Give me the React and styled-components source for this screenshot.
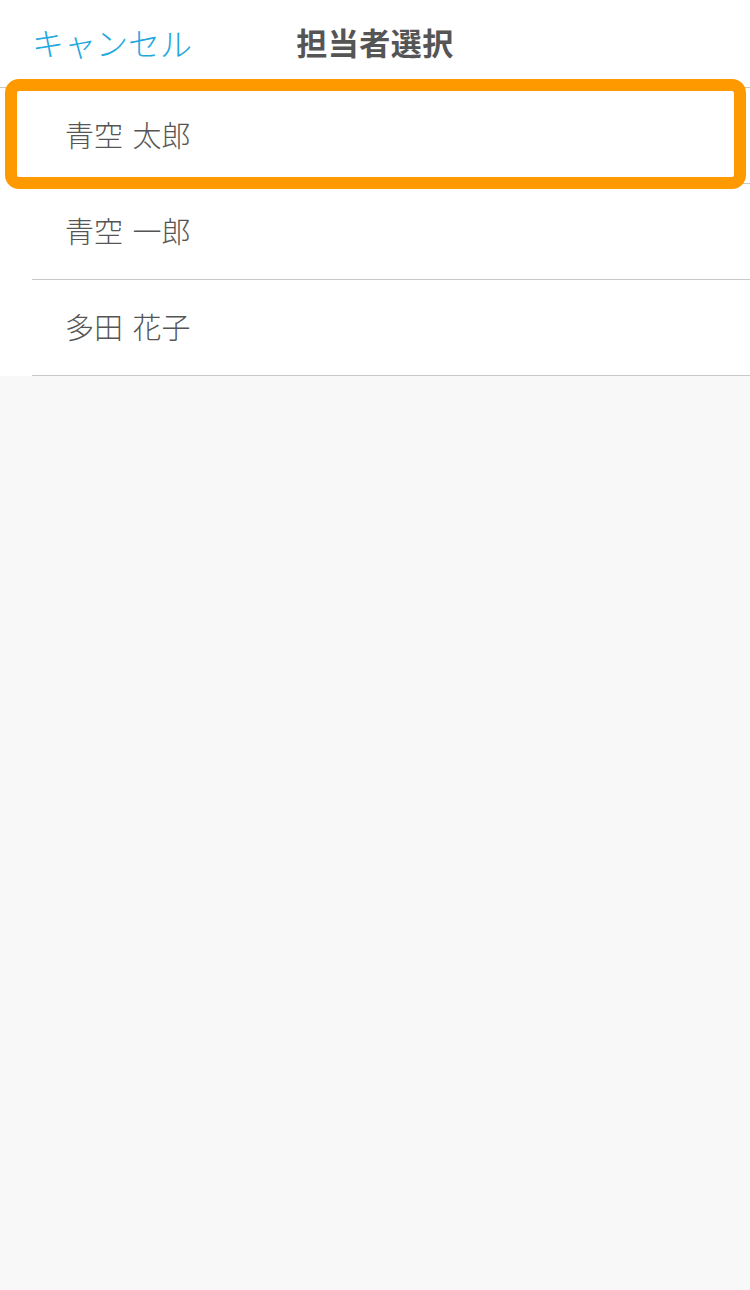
import styled, { createGlobalStyle } from 'styled-components';

const GlobalStyle = createGlobalStyle`
  html, body {
    margin: 0;
    padding: 0;
    background: #f8f8f8;
  }
  body {
    font-family: "Noto Sans CJK JP", "Noto Sans", sans-serif;
  }
`;

const staff = [
  { id: 1, name: '青空 太郎', selected: true },
  { id: 2, name: '青空 一郎' },
  { id: 3, name: '多田 花子' },
];

function App() {
  return (
    <>
      <GlobalStyle />
      <Page>
        <Header>
          <CancelButton type='button'>キャンセル</CancelButton>
          <Title>担当者選択</Title>
        </Header>
        <List>
          {staff.map((person) => (
            <Row key={person.id}>
              <Name>{person.name}</Name>
              {person.selected && <Highlight />}
            </Row>
          ))}
        </List>
      </Page>
    </>
  );
}

export default App;

const Page = styled.div`
  width: 750px;
  min-height: 1290px;
  background: #f8f8f8;
`;

const Header = styled.header`
  position: relative;
  height: 88px;
  padding-bottom: 4px;
  background: #fff;
  border-bottom: 1px solid #c8c8c8;
  box-sizing: border-box;
  display: flex;
  align-items: center;
  justify-content: center;
`;

const CancelButton = styled.button`
  position: absolute;
  left: 32px;
  top: 0;
  height: 84px;
  padding: 0;
  border: none;
  background: none;
  font-family: inherit;
  font-size: 32px;
  font-weight: 300;
  color: #22a8e0;
  line-height: 1;
`;

const Title = styled.h1`
  margin: 0;
  font-size: 31px;
  font-weight: 700;
  color: #555;
  letter-spacing: 0.5px;
`;

const List = styled.ul`
  list-style: none;
  margin: 0;
  padding: 0 0 0 32px;
  background: #fff;
`;

const Row = styled.li`
  position: relative;
  height: 96px;
  box-sizing: border-box;
  border-bottom: 1px solid #c8c8c8;
  display: flex;
  align-items: center;
  padding: 0 0 4px 33px;
`;

const Name = styled.span`
  font-size: 29px;
  font-weight: 300;
  color: #555;
  word-spacing: 3px;
`;

const Highlight = styled.div`
  position: absolute;
  left: -27px;
  right: 4px;
  top: -9px;
  bottom: -6px;
  border: 12px solid #ff9900;
  border-radius: 14px;
  pointer-events: none;
`;
